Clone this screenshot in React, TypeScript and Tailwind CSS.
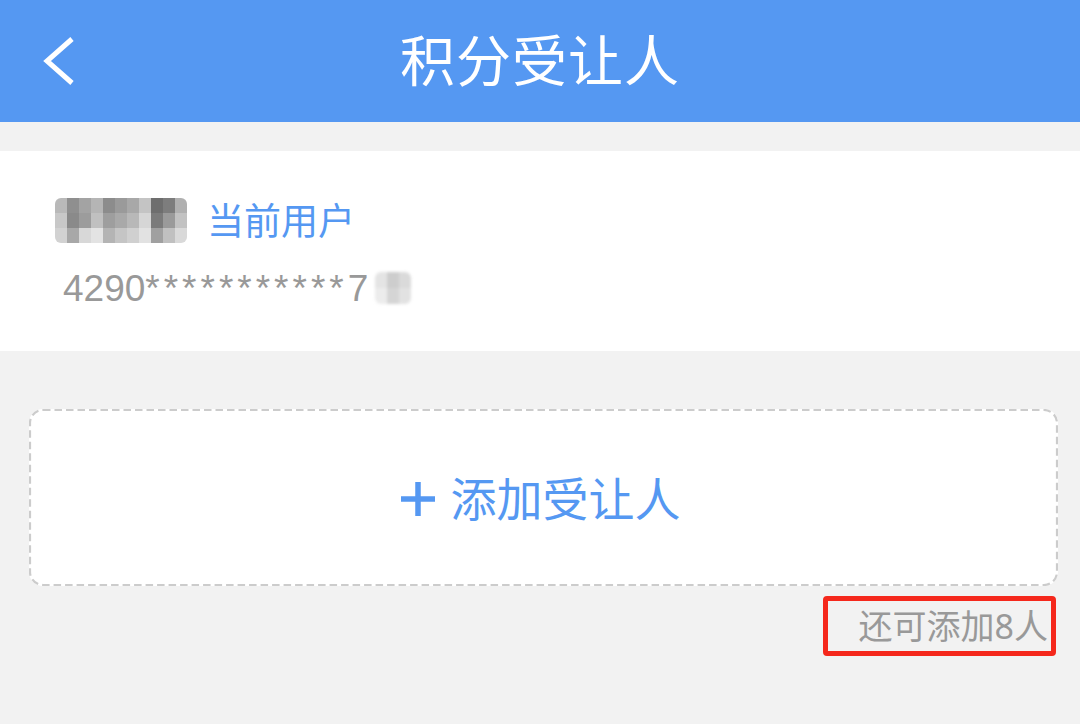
import React from "react";

// 모자이크 처리된 이름 (픽셀 블록)
const nameCells = [
  ["#b9b9b9", "#8f8f8f", "#a3a3a3", "#b5b5b5", "#8c8c8c", "#9a9a9a", "#a8a8a8", "#c4c4c4", "#6e6e6e", "#7d7d7d", "#b0b0b0"],
  ["#c8c8c8", "#8a8a8a", "#9c9c9c", "#c0c0c0", "#9e9e9e", "#a9a9a9", "#b8b8b8", "#d6d6d6", "#7b7b7b", "#9a9a9a", "#c2c2c2"],
  ["#d2d2d2", "#a8a8a8", "#d8d8d8", "#e3e3e3", "#b4b4b4", "#c5c5c5", "#d0d0d0", "#e2e2e2", "#a0a0a0", "#c0c0c0", "#d9d9d9"],
];

const tailCells = [
  ["#e4e4e4", "#cdcdcd", "#dadada"],
  ["#ececec", "#d5d5d5", "#e2e2e2"],
];

function Mosaic({ cells, w, h }: { cells: string[][]; w: number; h: number }) {
  return (
    <div className="flex flex-col rounded-md overflow-hidden">
      {cells.map((row, i) => (
        <div key={i} className="flex">
          {row.map((c, j) => (
            <div key={j} style={{ width: w, height: h, background: c }} />
          ))}
        </div>
      ))}
    </div>
  );
}

export default function App() {
  return (
    <div
      className="w-[1080px] h-[724px] bg-[#f2f2f2] overflow-hidden"
      style={{ fontFamily: '"Noto Sans", "Noto Sans CJK SC", sans-serif' }}
    >
      {/* 헤더 */}
      <header className="relative h-[122px] bg-[#5598f2] flex items-center justify-center">
        <svg
          className="absolute left-[40px] top-[36px]"
          width="38"
          height="50"
          viewBox="0 0 38 50"
        >
          <path
            d="M32 3 L7 25 L32 47"
            fill="none"
            stroke="#ffffff"
            strokeWidth="5"
            strokeLinejoin="miter"
          />
        </svg>
        <h1 className="text-white text-[55px] leading-none tracking-[1px] mt-[-4px]">
          积分受让人
        </h1>
      </header>

      {/* 현재 사용자 */}
      <section className="mt-[29px] bg-white h-[200px] pl-[55px] pt-[46px]">
        <div className="flex items-center h-[46px]">
          <div className="blur-[0.6px]">
            <Mosaic cells={nameCells} w={12} h={15} />
          </div>
          <span className="ml-[20px] text-[37px] leading-none text-[#5598f2]">
            当前用户
          </span>
        </div>
        <div
          className="flex items-center mt-[27px] h-[36px] pl-[8px] text-[37px] leading-none text-[#999999]"
          style={{ fontFamily: '"Liberation Sans", Arial, sans-serif' }}
        >
          <span>4290</span>
          <span className="tracking-[4px]">***********</span>
          <span>7</span>
          <div className="blur-[1.5px] ml-[7px]">
            <Mosaic cells={tailCells} w={12} h={16} />
          </div>
        </div>
      </section>

      {/* 수취인 추가 */}
      <div className="pl-[29px] pt-[58px]">
        <button className="relative w-[1029px] h-[177px] bg-white rounded-[14px] flex items-center justify-center pr-[9px] text-[#5598f2]">
          <svg
            className="absolute inset-0 pointer-events-none"
            width="1029"
            height="177"
            viewBox="0 0 1029 177"
          >
            <rect
              x="1"
              y="1"
              width="1027"
              height="175"
              rx="13"
              fill="none"
              stroke="#cccccc"
              strokeWidth="2.2"
              strokeDasharray="7.5 4"
            />
          </svg>
          <svg width="40" height="40" viewBox="0 0 40 40" className="mr-[13px] mt-[2px]">
            <path d="M20 3 V37 M3 20 H37" stroke="#5598f2" strokeWidth="5.5" />
          </svg>
          <span className="text-[46px] leading-none">添加受让人</span>
        </button>
        <div className="flex w-[1029px] justify-end mt-[10px]">
          <div className="w-[233px] h-[60px] border-[5px] border-[#f5281c] rounded-[4px] flex items-center justify-end pr-[3px] mr-[2px]">
            <span className="text-[34px] leading-none text-[#999999]">还可添加8人</span>
          </div>
        </div>
      </div>
    </div>
  );
}
